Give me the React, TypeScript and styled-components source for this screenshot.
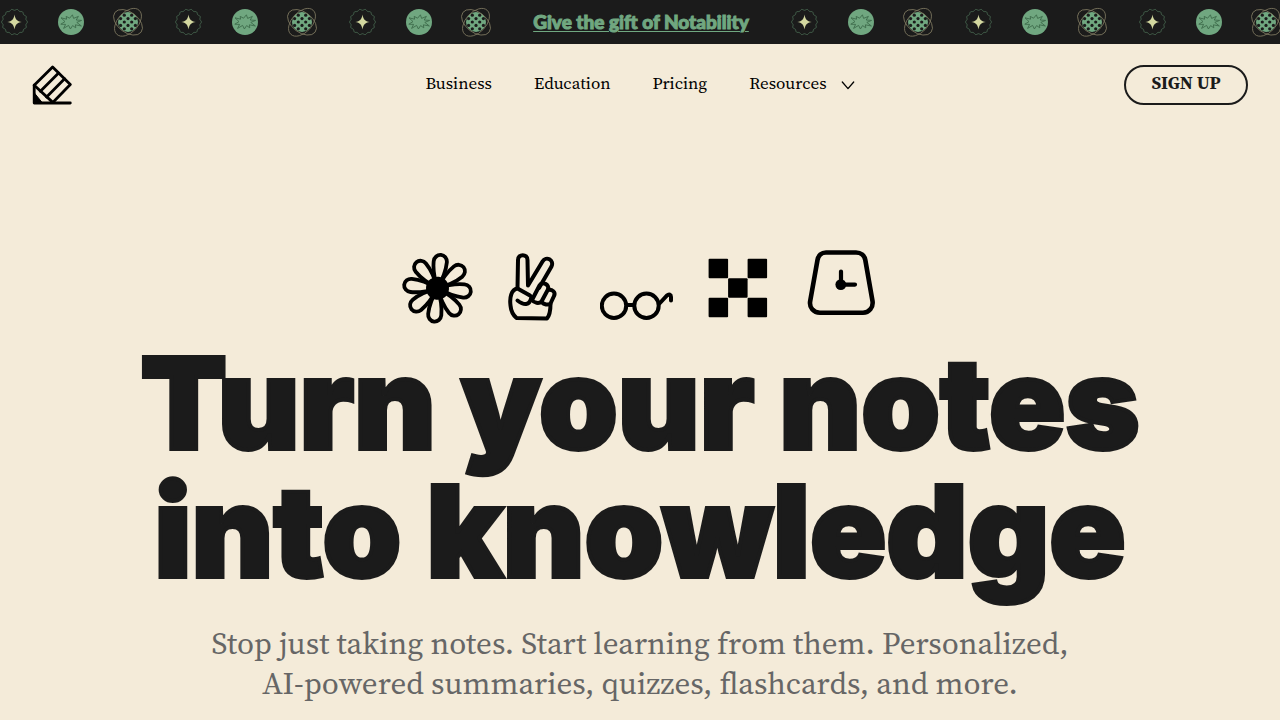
import React from "react";
import styled, { createGlobalStyle } from "styled-components";

const ink = "#1b1b1b";
const cream = "#f4ebd9";
const green = "#70a780";
const serif = `"Source Serif 4", "Liberation Serif", serif`;

const GlobalStyle = createGlobalStyle`
  *, *::before, *::after { box-sizing: border-box; }
  body {
    margin: 0;
    background: ${cream};
    color: ${ink};
    font-family: ${serif};
    overflow-x: hidden;
  }
`;

const Banner = styled.aside`
  display: flex;
  align-items: center;
  height: 44px;
  padding-left: 1px;
  overflow: hidden;
  background: ${ink};
`;

const BadgeRun = styled.div`
  display: flex;
  flex: none;
  gap: 32px;
`;

const BadgeGroup = styled.div`
  display: flex;
  align-items: center;
  gap: 29px;
`;

const BannerSlot = styled.div`
  display: flex;
  flex: none;
  justify-content: center;
  width: 300px;
`;

const BannerLink = styled.a`
  color: ${green};
  font: 900 19px/24px Lato, sans-serif;
  text-decoration: underline;
  text-decoration-thickness: 1px;
  text-underline-offset: 2px;
  white-space: nowrap;
  -webkit-text-stroke: 1px ${green};
`;

const BadgeSvg = styled.svg`
  display: block;
  flex: none;
`;

const Header = styled.header`
  display: grid;
  grid-template-columns: 1fr auto 1fr;
  align-items: center;
  padding: 21px 32px 19px;
`;

const LogoLink = styled.a`
  justify-self: start;
  color: #000;
  svg { display: block; }
`;

const Nav = styled.nav`
  display: flex;
  align-items: center;
  gap: 42px;
  padding-bottom: 5px;
`;

const NavLink = styled.a`
  color: #000;
  font-size: 17px;
  line-height: 24px;
  text-decoration: none;
`;

const NavButton = styled.button`
  display: flex;
  align-items: center;
  gap: 14px;
  padding: 0;
  border: 0;
  background: none;
  color: #000;
  font-family: inherit;
  font-size: 17px;
  line-height: 24px;
  cursor: pointer;
`;

const SignUp = styled.button`
  justify-self: end;
  min-width: 124px;
  height: 40px;
  padding: 0 24px 4px;
  border: 2px solid ${ink};
  border-radius: 20px;
  background: transparent;
  color: ${ink};
  font: 700 18px/24px ${serif};
  cursor: pointer;
`;

const Hero = styled.main`
  display: flex;
  flex-direction: column;
  align-items: center;
  padding: 122px 32px 16px;
  text-align: center;
`;

const Drawings = styled.div`
  display: flex;
  gap: 20px;
  svg { display: block; }
`;

const Title = styled.h1`
  margin: 13px 0 0;
  color: ${ink};
  font: 900 126px/128px Inter, sans-serif;
  -webkit-text-stroke: 4px ${ink};
`;

const Lead = styled.p`
  max-width: 960px;
  margin: 28px 0 0;
  color: #666666;
  font-size: 31px;
  line-height: 40px;
`;

const scallop = (() => {
  const steps = 112;
  const points: string[] = [];
  for (let i = 0; i < steps; i++) {
    const a = (i / steps) * Math.PI * 2;
    const r = 12.3 + 0.6 * Math.cos(a * 14);
    points.push(`${(13.5 + r * Math.cos(a)).toFixed(2)},${(15 + r * Math.sin(a)).toFixed(2)}`);
  }
  return points.join(" ");
})();

const SparkBadge = () => (
  <BadgeSvg width="28" height="30" viewBox="0 0 28 30" aria-hidden="true">
    <polygon points={scallop} fill="none" stroke="#44614c" strokeWidth="1" />
    <path d="M13.5 7.5C14.3 12.2 15.8 14.2 20.8 15C15.8 15.8 14.3 17.8 13.5 22.5C12.7 17.8 11.2 15.8 6.2 15C11.2 14.2 12.7 12.2 13.5 7.5Z" fill="#d4d8a0" />
  </BadgeSvg>
);

const BurstBadge = () => (
  <BadgeSvg width="26" height="30" viewBox="0 0 26 30" aria-hidden="true">
    <circle cx="13" cy="15" r="13" fill={green} />
    <path
      d="M3 10.8L8.6 12.2L8.2 9.4L11.6 11.2L14.4 7.8L15.6 11.4L20.4 9.4L18.2 13L23.6 13.4L18.8 15.4L23.4 19L17.4 17.8L17.8 20.8L14.6 18.6L12.4 22L10.6 18.4L5.6 21.4L7.6 17.4L2.8 17.2L7 14.6Z"
      fill="none"
      stroke="#3d6b4b"
      strokeWidth="0.9"
    />
  </BadgeSvg>
);

const dots = [
  [11.3, 8.2], [18.7, 8.2],
  [7.6, 11.6], [15, 11.6], [22.4, 11.6],
  [11.3, 15], [18.7, 15],
  [7.6, 18.4], [15, 18.4], [22.4, 18.4],
  [11.3, 21.8], [18.7, 21.8],
];

const AtomBadge = () => (
  <BadgeSvg width="30" height="30" viewBox="0 0 30 30" aria-hidden="true">
    <circle cx="15" cy="15" r="10" fill={green} />
    {dots.map(([x, y]) => (
      <circle key={`${x}-${y}`} cx={x} cy={y} r="1.6" fill={ink} />
    ))}
    <g fill="none" stroke="#7f7a61" strokeWidth="0.8">
      <ellipse cx="15" cy="15.3" rx="16.4" ry="10.2" transform="rotate(37 15 15.3)" />
      <ellipse cx="15" cy="15.3" rx="16.4" ry="10.2" transform="rotate(-47 15 15.3)" />
    </g>
  </BadgeSvg>
);

const Badges = () => (
  <BadgeRun>
    {[0, 1, 2].map((n) => (
      <BadgeGroup key={n}>
        <SparkBadge />
        <BurstBadge />
        <AtomBadge />
      </BadgeGroup>
    ))}
  </BadgeRun>
);

const Logo = () => (
  <svg width="40" height="40" viewBox="0 0 40 40" fill="none" stroke="currentColor" strokeWidth="2.8" strokeLinejoin="round" strokeLinecap="round" aria-hidden="true">
    <path d="M2.2 20.2L20.6 2L38.3 19.6L20.8 37.4Z" />
    <path d="M8.4 26.2L26.6 8M14.6 32L32.6 13.8" />
    <path d="M2.2 20.2V38H38.3" />
    <path d="M2 27.5L10.5 38H2Z" fill="currentColor" strokeWidth="1" />
  </svg>
);

const petals = [0, 45, 90, 135, 180, 225, 270, 315];

const Daisy = () => (
  <svg width="80" height="80" viewBox="0 0 80 80" aria-hidden="true">
    <g transform="translate(37.5 42.2) rotate(6)" fill="none" stroke="#000" strokeWidth="3.8">
      {petals.map((a) => (
        <path key={a} transform={`rotate(${a})`} d="M0 0C-4 -9 -6.6 -19 -6.6 -26.5A6.6 7 0 0 1 6.6 -26.5C6.6 -19 4 -9 0 0Z" />
      ))}
      <circle r="11.5" fill="#000" stroke="none" />
    </g>
  </svg>
);

const Peace = () => (
  <svg width="80" height="80" viewBox="0 0 80 80" fill="none" stroke="#000" strokeWidth="4" strokeLinecap="round" strokeLinejoin="round" aria-hidden="true">
    <path d="M17.5 42L18 14C18 7.5 27.5 7.5 27.5 14L28 39.5L42.5 15.5C46 9.5 54.5 14 51.5 20.5L39 42" />
    <path d="M30 49.5L17.5 42.5C11 43.5 9.5 52 10.5 59.5C11 65 13 69 16.5 72L47 72.5C50 69 50.5 64 50.5 58" />
    <path d="M17.5 54.5C24 59.5 29.5 60 31.5 51" />
    <path d="M32 54L39.5 39.5C42 35 50 38.5 48 43.5L41.5 55.5C39 58 34 57 32 54Z" />
    <path d="M48 44C52 43 56 46 54 50L50.5 57.5C48 59.5 44 58.5 41.5 56" />
  </svg>
);

const Glasses = () => (
  <svg width="80" height="80" viewBox="0 0 80 80" fill="none" stroke="#000" strokeWidth="4" strokeLinecap="round" aria-hidden="true">
    <circle cx="14" cy="59.7" r="12.2" />
    <circle cx="46.5" cy="59.7" r="12.2" />
    <path d="M27 59H34M59.5 57.5L67 49.5C69 47.5 71 48.5 71 51V54.5" />
  </svg>
);

const Checker = () => (
  <svg width="80" height="80" viewBox="0 0 80 80" aria-hidden="true">
    {[[8.6, 12.8], [47.6, 12.8], [28.1, 32.3], [8.6, 51.8], [47.6, 51.8]].map(([x, y]) => (
      <rect key={`${x}-${y}`} x={x} y={y} width="19.5" height="19.5" rx="1" fill="#000" />
    ))}
  </svg>
);

const Clock = () => (
  <svg width="80" height="80" viewBox="0 0 80 80" fill="none" stroke="#000" strokeWidth="4.6" strokeLinecap="round" strokeLinejoin="round" aria-hidden="true">
    <path d="M26 6.5H56C61 6.5 64.5 9.5 65.3 14L72.5 55C73.5 61.5 69 66.7 63 66.7H20C13.5 66.7 9 61.5 10.2 55L17.5 14C18.3 9.5 21.5 6.5 26 6.5Z" />
    <path d="M41 38.6V25.5M41 38.6H55" strokeWidth="4.2" />
    <circle cx="40.8" cy="38.6" r="5.4" fill="#000" stroke="none" />
  </svg>
);

const Chevron = () => (
  <svg width="14" height="14" viewBox="0 0 14 14" fill="none" stroke="currentColor" strokeWidth="1.3" strokeLinecap="round" strokeLinejoin="round" aria-hidden="true">
    <path d="M1.3 6L7 12.6L12.7 6" />
  </svg>
);

export default function App() {
  return (
    <>
      <GlobalStyle />
      <Banner>
        <Badges />
        <BannerSlot>
          <BannerLink href="#gift">Give the gift of Notability</BannerLink>
        </BannerSlot>
        <Badges />
      </Banner>
      <Header>
        <LogoLink href="#home" aria-label="Notability">
          <Logo />
        </LogoLink>
        <Nav>
          <NavLink href="#business">Business</NavLink>
          <NavLink href="#education">Education</NavLink>
          <NavLink href="#pricing">Pricing</NavLink>
          <NavButton type="button" aria-haspopup="true">
            Resources
            <Chevron />
          </NavButton>
        </Nav>
        <SignUp type="button">SIGN UP</SignUp>
      </Header>
      <Hero>
        <Drawings>
          <Daisy />
          <Peace />
          <Glasses />
          <Checker />
          <Clock />
        </Drawings>
        <Title>
          Turn your notes
          <br />
          into knowledge
        </Title>
        <Lead>
          Stop just taking notes. Start learning from them. Personalized,
          <br />
          AI-powered summaries, quizzes, flashcards, and more.
        </Lead>
      </Hero>
    </>
  );
}
